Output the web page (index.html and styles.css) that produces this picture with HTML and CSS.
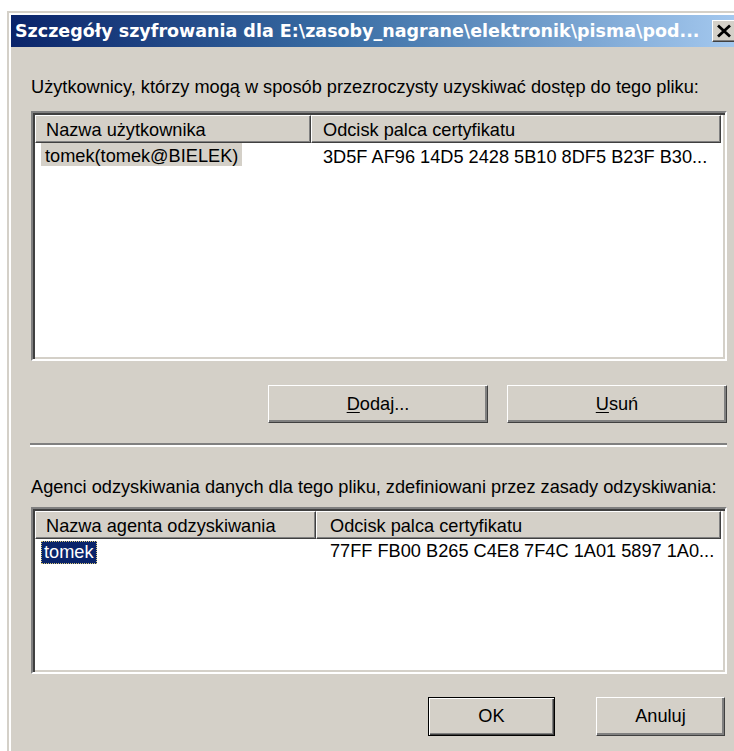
FILE: index.html
```html
<!DOCTYPE html>
<html lang="pl">
<head>
<meta charset="utf-8">
<title>Szczegóły szyfrowania</title>
<link rel="stylesheet" href="styles.css">
</head>
<body>
<div class="window">
  <div class="titlebar">
    <span class="title">Szczegóły szyfrowania dla E:\zasoby_nagrane\elektronik\pisma\pod...</span>
    <span class="close-btn" aria-label="Zamknij">
      <svg width="16" height="14" viewBox="0 0 16 14"><path d="M2 1.5 L14 12.5 M14 1.5 L2 12.5" stroke="#000" stroke-width="2.8" fill="none"/></svg>
    </span>
  </div>
  <div class="content">
    <p class="label label-users">Użytkownicy, którzy mogą w sposób przezroczysty uzyskiwać dostęp do tego pliku:</p>
    <div class="listview list-users">
      <div class="lv-header">
        <div class="lv-col col-name-users">Nazwa użytkownika</div>
        <div class="lv-col col-thumb">Odcisk palca certyfikatu</div>
      </div>
      <div class="lv-row">
        <div class="lv-cell col-name-users"><span class="sel sel-inactive">tomek(tomek@BIELEK)</span></div>
        <div class="lv-cell col-thumb">3D5F AF96 14D5 2428 5B10 8DF5 B23F B30...</div>
      </div>
    </div>
    <div class="btn-row btn-row-list">
      <button class="btn btn-wide"><u>D</u>odaj...</button>
      <button class="btn btn-wide"><u>U</u>suń</button>
    </div>
    <div class="separator"></div>
    <p class="label label-agents">Agenci odzyskiwania danych dla tego pliku, zdefiniowani przez zasady odzyskiwania:</p>
    <div class="listview list-agents">
      <div class="lv-header">
        <div class="lv-col col-name-agents">Nazwa agenta odzyskiwania</div>
        <div class="lv-col col-thumb col-thumb-agents">Odcisk palca certyfikatu</div>
      </div>
      <div class="lv-row">
        <div class="lv-cell col-name-agents"><span class="sel sel-focus">tomek</span></div>
        <div class="lv-cell col-thumb col-thumb-agents">77FF FB00 B265 C4E8 7F4C 1A01 5897 1A0...</div>
      </div>
    </div>
    <div class="btn-row btn-row-dialog">
      <button class="btn btn-default">OK</button>
      <button class="btn btn-cancel">Anuluj</button>
    </div>
  </div>
</div>
</body>
</html>
```

FILE: styles.css
```css
html, body {
  margin: 0;
  padding: 0;
  overflow: hidden;
  background: #ffffff;
}

body {
  font-family: "Liberation Sans", Arial, sans-serif;
  font-size: 18.2px;
  line-height: 21px;
  color: #000;
}

/* classic raised window frame */
.window {
  margin: 11px 0 0 7px;
  width: 740px;
  height: 760px;
  box-sizing: border-box;
  background: #d4d0c8;
  border: 2px solid;
  border-color: #d4d0c8 #404040 #404040 #d4d0c8;
  padding: 2px;
  box-shadow: inset 2px 2px #ffffff;
}

.titlebar {
  height: 32px;
  box-sizing: border-box;
  display: flex;
  align-items: center;
  padding: 1px 0 0 4px;
  background: linear-gradient(to right, #0a246a 0%, #3a6ea5 45%, #a6caf0 100%);
  color: #fff;
}

.title {
  font-family: "DejaVu Sans", Verdana, sans-serif;
  font-weight: bold;
  font-size: 17.5px;
  white-space: nowrap;
  flex: 1;
  overflow: hidden;
}

.close-btn {
  width: 28px;
  height: 22px;
  margin: -1px 3px 0 0;
  flex: none;
  box-sizing: border-box;
  background: #d4d0c8;
  border: 1px solid;
  border-color: #ffffff #404040 #404040 #ffffff;
  box-shadow: inset -1px -1px #808080;
  display: flex;
  align-items: center;
  padding-left: 3px;
}

.close-btn svg {
  display: block;
}

.content {
  padding: 0 16px 0 20px;
}

.label {
  margin: 0;
  white-space: nowrap;
}

.label-users {
  margin-top: 30px;
}

.label-agents {
  margin-top: 30px;
}

/* sunken list view */
.listview {
  background: #fff;
  border: 2px solid;
  border-color: #808080 #ffffff #ffffff #808080;
  box-shadow: inset 2px 2px #404040, inset -2px -2px #d4d0c8;
  padding: 2px;
  box-sizing: border-box;
}

.list-users {
  margin-top: 13px;
  height: 250px;
}

.list-agents {
  margin-top: 9px;
  height: 167px;
}

.lv-header {
  display: flex;
  height: 28px;
}

.lv-col {
  box-sizing: border-box;
  height: 28px;
  background: #d4d0c8;
  border: 1px solid;
  border-color: #ffffff #404040 #404040 #ffffff;
  box-shadow: inset -1px -1px #808080;
  padding: 4px 0 0 10px;
  white-space: nowrap;
}

.col-name-users { width: 276px; }
.col-name-agents { width: 281px; }
.col-thumb { width: 410px; padding-left: 11px; }
.col-thumb-agents { width: 405px; padding-left: 13px; }

.lv-row {
  display: flex;
}

.lv-cell {
  box-sizing: border-box;
  white-space: nowrap;
}

.lv-row .col-name-users,
.lv-row .col-name-agents {
  padding-left: 6px;
}

.list-users .lv-row .col-thumb {
  padding-top: 4px;
  padding-left: 12px;
}

.list-agents .lv-row .col-thumb {
  padding-top: 2px;
  padding-left: 14px;
}

.sel {
  display: inline-block;
}

.sel-inactive {
  background: #d4d0c8;
  padding: 4px 4px 0 4px;
  line-height: 19px;
}

.sel-focus {
  margin-top: 2px;
  background: #0a246a;
  color: #fff;
  padding: 0 2px;
  border: 1px dotted #d8c77a;
}

.btn-row {
  display: flex;
  justify-content: flex-end;
}

.btn-row-list {
  margin-top: 24px;
  gap: 19px;
}

.btn-row-dialog {
  margin-top: 23px;
  gap: 41px;
  padding-right: 2px;
}

.btn {
  font: inherit;
  color: #000;
  margin: 0;
  padding: 0;
  box-sizing: border-box;
  background: #d4d0c8;
  border: 1px solid;
  border-color: #ffffff #404040 #404040 #ffffff;
  box-shadow: inset -2px -2px #808080;
  text-align: center;
  cursor: default;
}

.btn u {
  text-underline-offset: 2px;
}

.btn-wide {
  width: 220px;
  height: 38px;
}

.btn-default {
  width: 127px;
  height: 39px;
  border: 1px solid #000;
  box-shadow: inset 1px 1px #ffffff, inset -1px -1px #404040, inset -2px -2px #808080;
}

.btn-cancel {
  width: 129px;
  height: 39px;
}

/* etched horizontal rule */
.separator {
  margin: 20px 0 0 -1px;
  height: 2px;
  border-top: 2px solid #808080;
  background: #ffffff;
}
```
